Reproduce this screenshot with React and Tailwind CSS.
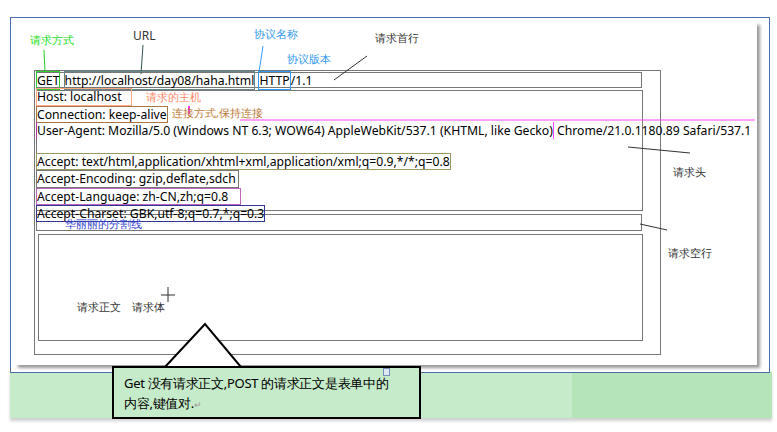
import React from "react";

const Label = ({ x, y, className = "", children }) => (
  <div className={`absolute whitespace-nowrap leading-none ${className}`} style={{ left: x, top: y }}>
    {children}
  </div>
);

export default function App() {
  const cjk = "font-['Noto_Sans_CJK_SC',sans-serif] text-[11px]";
  return (
    <div className="relative w-[777px] h-[432px] bg-white overflow-hidden font-['Liberation_Sans','Noto_Sans_CJK_SC',sans-serif] text-black">
      {/* green page strip */}
      <div className="absolute left-[10px] top-[372px] w-[762px] h-[46px] flex shadow-[0_3px_3px_#cfcfcf]">
        <div className="w-[562px] bg-[#c6ebca]" />
        <div className="flex-1 bg-[#b6e4b9]" />
      </div>
      {/* frame */}
      <div className="absolute left-[10px] top-[17px] w-[760px] h-[356px] border border-[#4a6fa8] p-[4px]">
        <div className="w-[742px] h-[343px] bg-white shadow-[3px_3px_3px_#9a9a9a]" />
      </div>

      {/* boxes */}
      <div className="absolute left-[34px] top-[70px] w-[627px] h-[285px] border border-[#777] p-[1px] flex flex-col gap-[2px]">
        <div className="w-[606px] h-[16px] border border-[#777]" />
        <div className="w-[607px] h-[121px] border border-[#777]" />
        <div className="w-[606px] h-[17px] mt-[1px] border border-[#777]" />
        <div className="w-[605px] h-[107px] ml-[2px] mt-[1px] border border-[#777]" />
      </div>

      {/* lines */}
      <svg className="absolute left-0 top-0" width="777" height="432">
        <line x1="44" y1="50" x2="45" y2="72" stroke="#22cc22" />
        <line x1="143" y1="45" x2="141" y2="74" stroke="#335555" />
        <line x1="263" y1="46" x2="259" y2="72" stroke="#3399ff" />
        <line x1="367" y1="56" x2="334" y2="80" stroke="#333" />
        <line x1="240" y1="120" x2="755" y2="120" stroke="#ff44ff" />
        <line x1="628" y1="147" x2="690" y2="153" stroke="#333" />
        <line x1="640" y1="224" x2="667" y2="230" stroke="#333" />
        <line x1="168" y1="287" x2="168" y2="302" stroke="#333" />
        <line x1="161" y1="295" x2="175" y2="295" stroke="#333" />
        <line x1="189" y1="106" x2="189" y2="114" stroke="#ff33ff" strokeWidth="2" />
        <polygon points="165,367 205,324 241,367" fill="white" stroke="black" strokeWidth="2" />
      </svg>

      {/* request text */}
      <div className="absolute left-[36px] top-[73px] flex flex-col items-start whitespace-nowrap text-[12.2px] leading-[15.3px]">
        <div>
          <span className="border border-[#33cc33]">GET</span>{" "}
          <span className="border border-[#668888]">http://localhost/day08/haha.html</span>{" "}
          <span className="border border-[#3399ff]">HTTP</span>/1.1
        </div>
        <span className="border border-[#ffaa88] pr-[9px]">Host: localhost</span>
        <span className="border border-[#aa7744]">Connection: keep-alive</span>
        <div>
          <span className="border-l border-[#aa33aa]">User-Agent: Mozilla/5.0 (Windows NT 6.3; WOW64) AppleWebKit/537.1 (KHTML, like Gecko)</span>
          <span className="border-l border-[#ff44ff]"> Chrome/21.0.1180.89 Safari/537.1</span>
        </div>
        <div className="h-[15px]" />
        <span className="border border-[#999966]">Accept: text/html,application/xhtml+xml,application/xml;q=0.9,*/*;q=0.8</span>
        <span className="border border-[#777] pr-[2px]">Accept-Encoding: gzip,deflate,sdch</span>
        <span className="border border-[#bb66bb] pr-[12px]">Accept-Language: zh-CN,zh;q=0.8</span>
        <span className="border border-[#333399]">Accept-Charset: GBK,utf-8;q=0.7,*;q=0.3</span>
      </div>

      {/* labels */}
      <Label x={30} y={34} className={`${cjk} text-[#22dd22]`}>请求方式</Label>
      <Label x={133} y={30} className="text-[12px] text-[#333]">URL</Label>
      <Label x={254} y={28} className={`${cjk} text-[#3399ee]`}>协议名称</Label>
      <Label x={287} y={53} className={`${cjk} text-[#3399ee]`}>协议版本</Label>
      <Label x={375} y={32} className={`${cjk} text-[#333]`}>请求首行</Label>
      <Label x={146} y={91} className={`${cjk} text-[#ff8866]`}>请求的主机</Label>
      <Label x={172} y={107} className={`${cjk} text-[#bb7733]`}>连接方式,保持连接</Label>
      <Label x={673} y={166} className={`${cjk} text-[#333]`}>请求头</Label>
      <Label x={668} y={247} className={`${cjk} text-[#333]`}>请求空行</Label>
      <Label x={65} y={218} className={`${cjk} text-[#3344cc]`}>华丽丽的分割线</Label>
      <Label x={77} y={301} className={`${cjk} text-[#333] flex gap-[11px]`}>
        <span>请求正文</span>
        <span>请求体</span>
      </Label>

      {/* callout */}
      <div className="absolute left-[112px] top-[366px] w-[309px] h-[53px] bg-[#c6ebca] border-2 border-black px-[10px] pt-[5px] text-[13px] leading-[20px] tracking-[-0.3px] font-['Noto_Sans_CJK_SC',sans-serif]">
        <div>Get 没有请求正文,POST 的请求正文是表单中的</div>
        <div>内容,键值对.<span className="text-[#999] text-[9px]">↵</span></div>
      </div>
      <div className="absolute left-[383px] top-[368px] w-[7px] h-[8px] bg-[#dde8f5] border border-[#7790bb]" />
    </div>
  );
}
